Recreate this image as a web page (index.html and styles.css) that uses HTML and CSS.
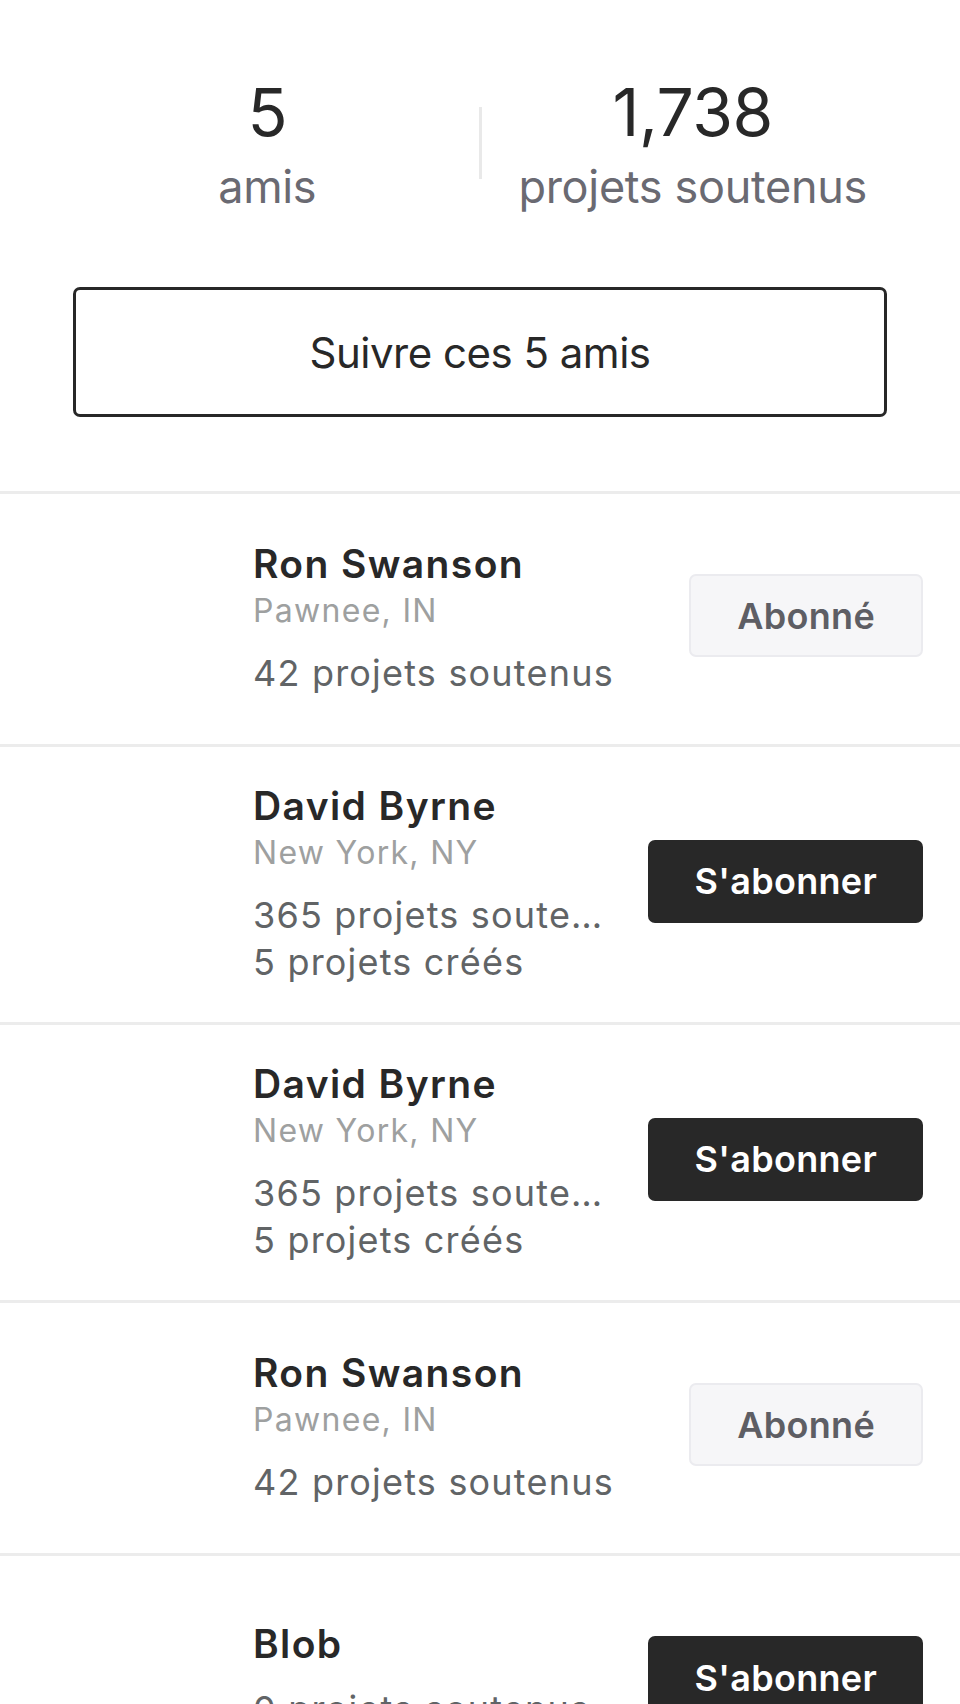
FILE: index.html
```html
<!DOCTYPE html>
<html lang="fr">
<head>
<meta charset="utf-8">
<title>Amis</title>
<link rel="stylesheet" href="styles.css">
</head>
<body>
<div class="page">
  <header class="header">
    <div class="stats">
      <div class="stat">
        <div class="stat-value">5</div>
        <div class="stat-label">amis</div>
      </div>
      <div class="stat-divider"></div>
      <div class="stat">
        <div class="stat-value">1,738</div>
        <div class="stat-label">projets soutenus</div>
      </div>
    </div>
    <button class="follow-all">Suivre ces 5 amis</button>
  </header>

  <ul class="friends">
    <li class="friend">
      <div class="info">
        <div class="name">Ron Swanson</div>
        <div class="location">Pawnee, IN</div>
        <div class="counts">
          <div class="count">42 projets soutenus</div>
        </div>
      </div>
      <button class="btn btn--followed">Abonné</button>
    </li>
    <li class="friend">
      <div class="info">
        <div class="name">David Byrne</div>
        <div class="location">New York, NY</div>
        <div class="counts">
          <div class="count">365 projets soutenus</div>
          <div class="count">5 projets créés</div>
        </div>
      </div>
      <button class="btn btn--follow">S'abonner</button>
    </li>
    <li class="friend">
      <div class="info">
        <div class="name">David Byrne</div>
        <div class="location">New York, NY</div>
        <div class="counts">
          <div class="count">365 projets soutenus</div>
          <div class="count">5 projets créés</div>
        </div>
      </div>
      <button class="btn btn--follow">S'abonner</button>
    </li>
    <li class="friend">
      <div class="info">
        <div class="name">Ron Swanson</div>
        <div class="location">Pawnee, IN</div>
        <div class="counts">
          <div class="count">42 projets soutenus</div>
        </div>
      </div>
      <button class="btn btn--followed">Abonné</button>
    </li>
    <li class="friend">
      <div class="info info--no-location">
        <div class="name">Blob</div>
        <div class="counts">
          <div class="count">0 projets soutenus</div>
        </div>
      </div>
      <button class="btn btn--follow">S'abonner</button>
    </li>
  </ul>
</div>
</body>
</html>
```

FILE: styles.css
```css
* {
  box-sizing: border-box;
}

html, body {
  margin: 0;
  padding: 0;
  background: #ffffff;
}

body {
  font-family: Inter, "Liberation Sans", sans-serif;
  color: #282828;
}

.page {
  width: 960px;
  overflow: hidden;
}

/* Header */
.header {
  padding: 79px 73px 74px;
  border-bottom: 3px solid #ececec;
  display: flex;
  flex-direction: column;
  gap: 73px;
}

.stats {
  display: flex;
  margin: 0 -17px;
}

.stat {
  flex: 1;
  text-align: center;
}

.stat-value {
  font-size: 66px;
  line-height: 66px;
  font-weight: 400;
  color: #282828;
  margin-bottom: 15px;
  letter-spacing: -0.5px;
}

.stat-label {
  font-size: 45px;
  line-height: 54px;
  color: #6a6a72;
  letter-spacing: -0.3px;
}

.stat-divider {
  width: 3px;
  height: 72px;
  background: #e9e9e9;
  align-self: center;
  margin-bottom: 8px;
}

.follow-all {
  height: 130px;
  width: 100%;
  background: #ffffff;
  border: 3px solid #282828;
  border-radius: 7px;
  font-family: inherit;
  font-size: 42px;
  color: #282828;
  padding: 0;
  letter-spacing: -0.5px;
}

/* Friends list */
.friends {
  list-style: none;
  margin: 0;
  padding: 0;
}

.friend {
  display: flex;
  align-items: center;
  gap: 40px;
  min-height: 253px;
  padding: 36px 37px 36px 253px;
  border-bottom: 3px solid #ececec;
}

.info {
  flex: 1;
  min-width: 0;
}

.info--no-location {
  padding-bottom: 8px;
}

.name {
  font-size: 39px;
  line-height: 46px;
  font-weight: 600;
  color: #282828;
  letter-spacing: 1.4px;
}

.location {
  margin-top: 4px;
  font-size: 32px;
  line-height: 40px;
  color: #9ea0a0;
  letter-spacing: 1.3px;
}

.counts {
  margin-top: 19px;
}

.count {
  font-size: 36px;
  line-height: 47px;
  color: #616466;
  white-space: nowrap;
  overflow: hidden;
  text-overflow: ellipsis;
  letter-spacing: 1.2px;
}

.btn {
  flex: none;
  height: 83px;
  padding: 0 46px;
  margin-bottom: 7px;
  border-radius: 7px;
  font-family: inherit;
  font-size: 36px;
  font-weight: 600;
  letter-spacing: 0.3px;
}

.btn--followed {
  background: #f6f6f8;
  border: 2px solid #ebebef;
  color: #5e5e64;
}

.btn--follow {
  background: #282828;
  border: 0;
  color: #ffffff;
}
```
